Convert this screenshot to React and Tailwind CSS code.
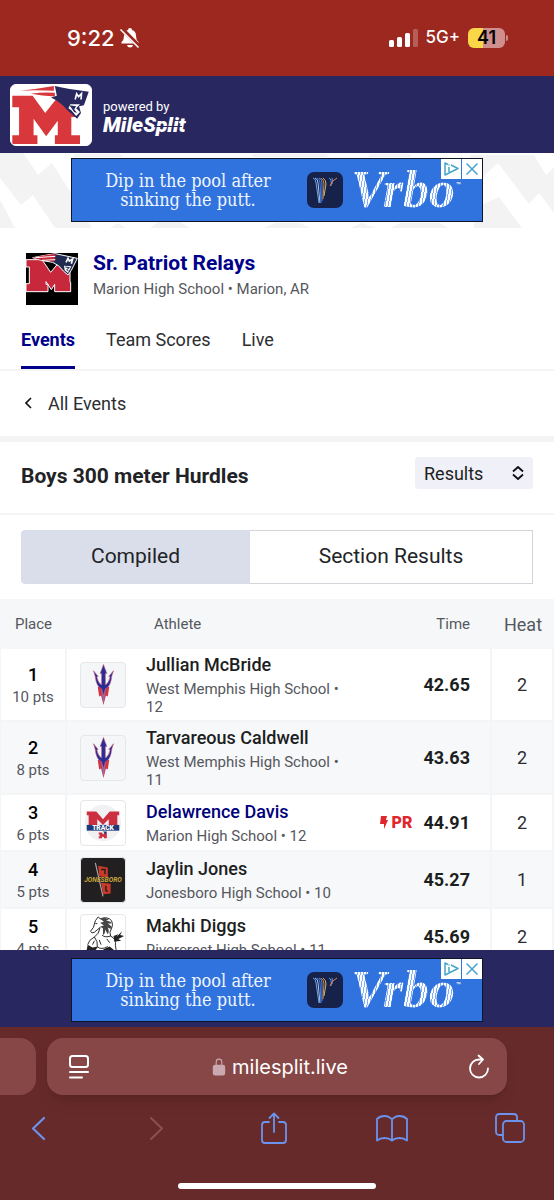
import { useState } from 'react';
import { IoLockClosed } from 'react-icons/io5';

const RESULTS = [
    { place: 1, points: 10, name: 'Jullian McBride', school: 'West Memphis High School', grade: 12, time: '42.65', heat: 2, logo: 'trident' },
    { place: 2, points: 8, name: 'Tarvareous Caldwell', school: 'West Memphis High School', grade: 11, time: '43.63', heat: 2, logo: 'trident' },
    { place: 3, points: 6, name: 'Delawrence Davis', school: 'Marion High School', grade: 12, time: '44.91', heat: 2, logo: 'track', pr: true, highlight: true },
    { place: 4, points: 5, name: 'Jaylin Jones', school: 'Jonesboro High School', grade: 10, time: '45.27', heat: 1, logo: 'jonesboro' },
    { place: 5, points: 4, name: 'Makhi Diggs', school: 'Rivercrest High School', grade: 11, time: '45.69', heat: 2, logo: 'horse' },
];

const TABS = ['Events', 'Team Scores', 'Live'];

const M_PATH = 'M1 11H22L35 29L46 15Q56 17 66 31V33H62V52H71V61H45V52H48V37L36 53L23 35V52H27V61H1V52H8V23H1Z';

function StatusBar() {
    return (
        <div className="flex h-[76px] shrink-0 items-center justify-between bg-[#9c2820] pl-[67px] pr-[46px] font-['Inter',sans-serif] text-white">
            <div className="flex items-center gap-1">
                <span className="text-[22px] font-medium">9:22</span>
                <svg width="22" height="22" viewBox="0 0 22 22" fill="#fff">
                    <path d="M11 1Q13 1 13 3Q17 4 17 9Q17 13 19.500 15V16.500H2.500V15Q5 13 5 9Q5 4 9 3Q9 1 11 1ZM8 18H14Q13.500 20.500 11 20.500Q8.500 20.500 8 18Z" />
                    <path d="M2.500 1.500L21 20" stroke="#9c2820" strokeWidth="4" />
                    <path d="M1.500 2.500L19.500 20.500" stroke="#fff" strokeWidth="1.600" />
                </svg>
            </div>
            <div className="flex items-center gap-[6px]">
                <svg width="30" height="19" viewBox="0 0 30 19" fill="#fff">
                    <rect x="0" y="11" width="5" height="7" rx="1.5" />
                    <rect x="8" y="8" width="5" height="10" rx="1.5" />
                    <rect x="16" y="4" width="5" height="14" rx="1.5" />
                    <rect x="24" y="0" width="5" height="18" rx="1.5" opacity="0.25" />
                </svg>
                <span className="text-[17px] font-medium">5G+</span>
                <div className="ml-[2px] flex items-center gap-px">
                    <div className="flex h-5 w-[37px] items-center justify-center rounded-md bg-linear-to-r from-[#fad748] from-40% to-[#cf8f8d] to-40% text-[18px] font-semibold leading-5 text-black">
                        41
                    </div>
                    <div className="h-[6px] w-[2px] rounded-r-full bg-[#cf8f8d]" />
                </div>
            </div>
        </div>
    );
}

function PatriotLogo() {
    return (
        <svg width="82" height="62" viewBox="0 0 82 62" className="rounded-md border border-white bg-white">
            <path d={M_PATH} fill="#d8373c" />
            <path d="M9 6Q27 4 44 1V6Q24 5 9 6Z" fill="#d8373c" />
            <path d="M20 9Q34 7 45 8V12Q32 11 20 9Z" fill="#d8373c" />
            <path d="M45 1Q58 4 80 7L75 21L70 22L72 29L68 35L58 26Q50 17 41 13L47 11Z" fill="#29285f" />
            <path d="M61 20H71L67 24L71 28L67 32L62 26L59 24Z" fill="#fff" />
            <path d="M60 21L67 22L65 25L68 29L65 28Z" fill="#29285f" />
            <path d="M66 15L67.500 9L69.500 12L72.500 9L72 15" fill="none" stroke="#fff" strokeWidth="1.700" />
        </svg>
    );
}

function MeetLogo() {
    return (
        <svg width="52" height="52" viewBox="0 0 78 78" className="shrink-0 bg-black">
            <path d="M0 10H24L37 29L47 17L66 28V44H67V58H43V47L38 55L30 43V47H33V58H0V46H5V21H0Z" fill="#c8283c" stroke="#fff" strokeWidth="1.5" />
            <path d="M10 7Q30 3 44 1L77 8L68 26L63 33L56 27Q50 18 40 14Q22 12 10 7Z" fill="#1f2b50" stroke="#fff" strokeWidth="1.5" />
            <path d="M10 7Q30 3 44 1L43 13Q26 12 10 7Z" fill="#c8283c" />
            <path d="M14 7L44 5M24 11L44 10" stroke="#fff" strokeWidth="1.5" />
            <path d="M60 14L63 8L65 12L70 9L68 16" fill="none" stroke="#fff" strokeWidth="2.4" />
            <path d="M57 19L68 20L63 30L58 26Z" fill="#fff" />
            <path d="M59 21L65 22L61 25L64 27" fill="none" stroke="#1f2b50" strokeWidth="1.5" />
        </svg>
    );
}

function AdBanner() {
    return (
        <a href="#vrbo" className="relative flex h-16 w-[412px] items-center border border-[#0e1524] bg-[#3173de] text-[#eef6ff]">
            <p className="w-[232px] text-center font-['DejaVu_Serif_Condensed','DejaVu_Serif',serif] text-[18px] leading-[19px]">
                Dip in the pool after
                <br />
                sinking the putt.
            </p>
            <svg width="36" height="36" viewBox="0 0 36 36" className="ml-[3px] shrink-0" fill="none" strokeWidth="1">
                <rect width="36" height="36" rx="7" fill="#16224a" />
                <path d="M6 6Q9 7 9 11L12 31" stroke="#6da4e8" />
                <path d="M8 6Q11 7 11 11L13 31" stroke="#a7c6f2" />
                <path d="M10 6Q13 7 13 11L14 31" stroke="#3f7de0" />
                <path d="M12 6Q15 7 15 11L15 29" stroke="#4b8cea" />
                <path d="M14 6Q17 8 17 12L16 27" stroke="#e0813c" />
                <path d="M16 6Q19 8 19 12L17 24" stroke="#d6b45c" />
                <path d="M22 6Q25 7 24 14M25 6Q26 9 25 12" stroke="#5a95ec" />
                <path d="M30 6Q25 8 23 14" stroke="#e0813c" />
            </svg>
            <span className="ml-2 shrink-0 bg-[repeating-linear-gradient(100deg,#ffffff_0_2px,#7fb0f5_2px_3px)] bg-clip-text pr-px font-['Liberation_Serif',serif] text-[52px] font-bold italic leading-[60px] text-transparent">
                Vrbo
            </span>
            <span className="-mt-2 shrink-0 text-[8px] leading-none text-white">™</span>
            <svg width="41" height="20" viewBox="0 0 41 20" className="absolute right-0 top-0" fill="none" stroke="#44a5c9" strokeWidth="1.5">
                <rect width="20" height="20" fill="#fff" stroke="none" />
                <rect x="21" width="20" height="20" fill="#fff" stroke="none" />
                <path d="M7 5.500L4 4V16L17 9.500L10 6" strokeLinejoin="round" />
                <path d="M8 8V13M8 5.500V6.500" />
                <path d="M25.500 4.500L36.500 15.500M36.500 4.500L25.500 15.500" />
            </svg>
        </a>
    );
}

function Trident() {
    return (
        <svg width="46" height="46" viewBox="0 0 46 46" className="rounded border border-gray-200 bg-[#f5f6f7]">
            <path d="M17.500 25L19 35L21 34L23.500 44L26 34L28 35L29.500 25Z" fill="#d5333f" />
            <path d="M21 27L23.500 43L26 27Z" fill="#8b6db8" />
            <path d="M13 8L18 14L16.500 14.500Q18 21 21.500 23V11H20L23.500 1.500L27 11H25.500V23Q29 21 30.500 14.500L29 14L34 8Q32 13 31.500 18Q30 25 25.500 27L23.500 34L21.500 27Q17 25 15.500 18Q15 13 13 8Z" fill="#2b2d96" stroke="#c9617c" strokeWidth="0.6" />
        </svg>
    );
}

function TrackLogo() {
    return (
        <svg width="46" height="46" viewBox="0 0 46 46" className="rounded border border-gray-200 bg-white">
            <circle cx="23" cy="23" r="19" fill="#f1f1f3" />
            <path d="M6 11H16L23 19L30 11H40V15H38V25H29V19L23 25L17 19V25H8V15H6Z" fill="#cc2f40" />
            <rect x="6" y="25" width="34" height="6" fill="#1e3a78" />
            <text x="23" y="30.500" textAnchor="middle" fill="#fff" fontFamily="Roboto, sans-serif" fontSize="7" fontWeight="900">TRACK</text>
            <path d="M18.500 33H22L23 35L25 33H27V39H24V37L23 38L22 37V39H18.500V37H19.500V35H18.500Z" fill="#cc2f40" />
            <path d="M23 32H27L26 35Z" fill="#1e3a78" />
        </svg>
    );
}

function JonesboroLogo() {
    return (
        <svg width="46" height="46" viewBox="0 0 46 46" className="rounded border border-gray-200 bg-[#211f20]">
            <path d="M15 5L23 40" stroke="#a9a7a8" strokeWidth="1.200" />
            <path d="M18 8L28 10V20L19 19Z" fill="#c93a2a" />
            <path d="M21 26L31 27V37L23 38Z" fill="#c93a2a" />
            <path d="M21 12L25 12V17M26 29V34L28 35" stroke="#211f20" strokeWidth="1.500" fill="none" />
            <text x="23" y="25.500" textAnchor="middle" fill="#c9a63a" fontFamily="Roboto, sans-serif" fontSize="7" fontWeight="700" fontStyle="italic">JONESBORO</text>
        </svg>
    );
}

function HorseLogo() {
    return (
        <svg width="46" height="46" viewBox="0 0 46 46" className="rounded border border-gray-200 bg-white" fill="none" stroke="#222" strokeWidth="1">
            <path d="M13 13L15 6L18 2L20 4Q28 1 32 6Q34 10 32 14M13 13L10 17Q11 20 14 18L20 13Q19 20 14 23Q8 26 7 31" />
            <path d="M32 14Q29 18 31 22Q37 25 36 32L38 44M14 23Q18 28 17 33Q21 37 28 33M31 22Q25 24 22 21" />
            <path d="M20 4Q26 2 29 5L26 6Q31 6 32 9L28 9Q33 12 32 15L28 13Q30 17 28 20L25 15Q26 19 23 21L23 14L20 12L24 11L20 8L24 7Z" fill="#444" stroke="none" />
            <path d="M34 22L39 20L37 23L43 17L41 21L45 22L39 25L42 27L35 28Z" fill="#222" stroke="none" />
            <path d="M7 31L12 34L18 33L15 37L10 38L7 45L5 41ZM23 36L30 33L35 37L33 45L28 39Z" fill="#222" stroke="none" />
            <path d="M15 9L17 9M27 25L30 29M14 27L12 31M19 26L21 31" />
        </svg>
    );
}

const LOGOS = { trident: Trident, track: TrackLogo, jonesboro: JonesboroLogo, horse: HorseLogo };

function ResultRow({ row, striped }) {
    const Logo = LOGOS[row.logo];
    return (
        <tr className={striped ? 'bg-[#f7f8fa]' : 'bg-white'}>
            <td className="h-[57px] border-b-2 border-l border-r-2 border-[#f4f5f7] text-center">
                <p className="text-[18px] font-medium leading-6 text-black">{row.place}</p>
                <p className="text-[15px] leading-5 text-[#55575d]">{row.points} pts</p>
            </td>
            <td className="border-b-2 border-[#f4f5f7] pl-[13px]">
                <Logo />
            </td>
            <td className="border-b-2 border-[#f4f5f7] py-1">
                <p className={row.highlight ? 'text-[18px] font-medium leading-6 text-[#00007b]' : 'text-[18px] font-medium leading-6 text-[#1c1e21]'}>{row.name}</p>
                <p className="mt-[3px] max-w-[206px] text-[15px] leading-[18px] text-[#55575d]">{row.school} • {row.grade}</p>
            </td>
            <td className="border-b-2 border-r-2 border-[#f4f5f7] pr-5">
                <div className="flex items-center justify-end gap-[11px]">
                    {row.pr && (
                        <span className="flex items-center gap-1 text-base font-black text-[#e1262d]">
                            <svg width="8" height="13" viewBox="0 0 8 13" fill="currentColor">
                                <path d="M1 0H7L6 4H8L4 13L4 8H0Z" />
                            </svg>
                            PR
                        </span>
                    )}
                    <span className="text-[18px] font-bold text-[#1c1e21]">{row.time}</span>
                </div>
            </td>
            <td className="border-b-2 border-r-2 border-[#f4f5f7] text-center text-[18px] text-[#2b2d31]">{row.heat}</td>
        </tr>
    );
}

function BrowserBar() {
    return (
        <div className="flex h-[173px] shrink-0 flex-col bg-[#672a2a] pt-[11px] font-['Inter',sans-serif]">
            <div className="flex h-[57px] gap-[11px]">
                <div className="w-9 rounded-r-2xl bg-[#874747]" />
                <div className="flex flex-1 items-center justify-between rounded-2xl bg-[#874747] pl-[22px] pr-[18px] text-white shadow-lg">
                    <button aria-label="Page menu">
                        <svg width="20" height="24" viewBox="0 0 20 24" fill="none" stroke="currentColor" strokeWidth="2" strokeLinecap="round">
                            <rect x="1" y="1" width="18" height="11" rx="2.500" />
                            <path d="M1 17H19M1 22.500H13" />
                        </svg>
                    </button>
                    <div className="flex items-center gap-1">
                        <IoLockClosed size={18} className="text-[#c9a8b0]" />
                        <span className="text-[20px]">milesplit.live</span>
                    </div>
                    <button aria-label="Reload">
                        <svg width="20" height="25" viewBox="0 0 20 25" fill="none" stroke="currentColor" strokeWidth="1.800" strokeLinecap="round" strokeLinejoin="round">
                            <path d="M19 14.500A9 9 0 1 1 10 5.500H14M9.500 1.500L14 5.500L10 10" />
                        </svg>
                    </button>
                </div>
                <div className="w-9" />
            </div>
            <div className="flex h-[66px] items-center justify-between pl-[22px] pr-7 text-[#6b93ee]">
                <button aria-label="Back" className="flex w-8 justify-center">
                    <svg width="15" height="25" viewBox="0 0 15 25" fill="none" stroke="currentColor" strokeWidth="2.200" strokeLinecap="round" strokeLinejoin="round">
                        <path d="M13 2L2 12.500L13 23" />
                    </svg>
                </button>
                <button aria-label="Forward" className="flex w-8 justify-center text-[#8b5050]">
                    <svg width="15" height="25" viewBox="0 0 15 25" fill="none" stroke="currentColor" strokeWidth="2" strokeLinecap="round" strokeLinejoin="round">
                        <path d="M2 2L13 12.500L2 23" />
                    </svg>
                </button>
                <button aria-label="Share" className="flex w-8 justify-center">
                    <svg width="26" height="32" viewBox="0 0 26 32" fill="none" stroke="currentColor" strokeWidth="1.800" strokeLinecap="round" strokeLinejoin="round">
                        <path d="M8 10H4Q1 10 1 13V28Q1 31 4 31H22Q25 31 25 28V13Q25 10 22 10H18M13 20V1.500M8.500 6L13 1.500L17.500 6" />
                    </svg>
                </button>
                <button aria-label="Bookmarks" className="flex w-8 justify-center">
                    <svg width="32" height="27" viewBox="0 0 32 27" fill="none" stroke="currentColor" strokeWidth="1.800" strokeLinejoin="round">
                        <path d="M16 4.500Q13 1 8.500 1Q4 1 1 4V25.500Q4 23 8.500 23Q13 23 16 25.500Q19 23 23.500 23Q28 23 31 25.500V4Q28 1 23.500 1Q19 1 16 4.500V25" />
                    </svg>
                </button>
                <button aria-label="Tabs" className="flex w-8 justify-center">
                    <svg width="30" height="30" viewBox="0 0 30 30" fill="none" stroke="currentColor" strokeWidth="1.800">
                        <rect x="8" y="8" width="21" height="21" rx="3.500" />
                        <path d="M8 22H4.500Q1 22 1 18.500V4.500Q1 1 4.500 1H18.500Q22 1 22 4.500V8" />
                    </svg>
                </button>
            </div>
            <div className="mx-auto mt-[22px] h-[6px] w-[198px] rounded-full bg-white" />
        </div>
    );
}

export default function App() {
    const [tab, setTab] = useState('Events');
    const [view, setView] = useState('compiled');

    return (
        <div className="flex h-screen flex-col bg-white font-['Roboto',sans-serif]">
            <StatusBar />

            <header className="flex h-[77px] shrink-0 items-center gap-[11px] bg-[#29275f] pl-[10px] text-white">
                <PatriotLogo />
                <div className="pt-[5px]">
                    <p className="text-[13px] leading-4">powered by</p>
                    <p className="relative text-[21px] font-black italic leading-5">
                        MileSplit
                        {/* slit through the wordmark */}
                        <span className="absolute right-1 top-[11px] h-px w-7 bg-[#29275f]" />
                    </p>
                </div>
            </header>

            <main className="min-h-0 flex-1 overflow-hidden">
                <div className="relative flex h-[75px] justify-center pt-[5px]">
                    <svg className="absolute inset-0 h-full w-full" viewBox="0 0 554 75" preserveAspectRatio="none" fill="#f3f3f3">
                        <path d="M0 0H23L38 22L52 10L71 40L92 75H55L33 42L21 52L0 25ZM0 47L15 75H0Z" />
                        <path d="M470 2H534L546 22L554 14V60L539 40L529 51L498 10L483 24L470 30ZM474 55L499 44L522 75H474Z" />
                        <path d="M110 75L118 70L126 75ZM150 75L158 69H180L190 75ZM264 75L275 70H300L310 75ZM350 75L362 70L376 75ZM390 75L400 70H440L448 75ZM74 1H120L124 4H74ZM250 1H330L326 4H254ZM370 1H410L412 4H368Z" />
                    </svg>
                    <AdBanner />
                </div>

                <div className="flex items-start gap-[15px] px-[26px] pt-[25px]">
                    <MeetLogo />
                    <div>
                        <h1 className="text-[21px] font-bold leading-5 text-[#00008b]">Sr. Patriot Relays</h1>
                        <p className="mt-[6px] text-[15px] leading-5 text-[#55575d]">Marion High School • Marion, AR</p>
                    </div>
                </div>

                <nav className="flex gap-[31px] border-b-2 border-[#f5f5f6] px-[21px] pt-[21px]">
                    {TABS.map(item => (
                        <button
                            key={item}
                            onClick={() => setTab(item)}
                            className={tab === item
                                ? 'h-[43px] border-b-3 border-[#00008b] pb-[14px] text-[18px] font-bold text-[#00008b]'
                                : 'h-[43px] border-b-3 border-transparent pb-[14px] text-[18px] text-[#2b2d31]'}
                        >
                            {item}
                        </button>
                    ))}
                </nav>

                <a href="#events" className="flex h-[65px] items-center gap-4 pb-px pl-[25px] text-[18px] text-[#2b2d31]">
                    <svg width="7" height="12" viewBox="0 0 7 12" fill="none" stroke="#111" strokeWidth="1.600">
                        <path d="M6 1L1 6L6 11" />
                    </svg>
                    All Events
                </a>

                <div className="flex h-[79px] items-center justify-between border-t-6 border-b-2 border-t-[#f4f4f5] border-b-[#f4f4f5] px-[21px]">
                    <h2 className="mb-[2px] text-[21px] font-bold text-[#212327]">Boys 300 meter Hurdles</h2>
                    <div className="relative mb-[9px]">
                        <select aria-label="View" className="block h-8 w-[118px] appearance-none rounded bg-[#eff0f8] pl-[9px] text-[18px] text-[#1c1e21]">
                            <option>Results</option>
                            <option>Entries</option>
                        </select>
                        <svg width="12" height="14" viewBox="0 0 12 14" className="pointer-events-none absolute right-[9px] top-[9px]" fill="none" stroke="#111" strokeWidth="1.800" strokeLinejoin="round">
                            <path d="M1 5.500L6 1L11 5.500M1 8.500L6 13L11 8.500" />
                        </svg>
                    </div>
                </div>

                <div className="flex px-[21px] py-[15px]">
                    <button
                        onClick={() => setView('compiled')}
                        className={view === 'compiled'
                            ? 'h-[54px] w-[229px] rounded-l border border-[#d8dce9] bg-[#dadeeb] text-[21px] text-[#212327]'
                            : 'h-[54px] w-[229px] rounded-l border border-[#d9dade] text-[21px] text-[#212327]'}
                    >
                        Compiled
                    </button>
                    <button
                        onClick={() => setView('sections')}
                        className={view === 'sections'
                            ? 'h-[54px] flex-1 border border-[#d8dce9] bg-[#dadeeb] text-[21px] text-[#212327]'
                            : 'h-[54px] flex-1 border border-l-0 border-[#d3d5da] text-[21px] text-[#212327]'}
                    >
                        Section Results
                    </button>
                </div>

                <table className="w-full table-fixed border-separate border-spacing-0">
                    <colgroup>
                        <col className="w-[67px]" />
                        <col className="w-[79px]" />
                        <col />
                        <col className="w-[124px]" />
                        <col className="w-[62px]" />
                    </colgroup>
                    <thead>
                        <tr className="h-[50px] bg-[#f6f7f9] text-[15px] text-[#55575d]">
                            <th className="font-normal">Place</th>
                            <th aria-label="Team" />
                            <th className="pl-2 text-left font-normal">Athlete</th>
                            <th className="pr-[22px] text-right font-normal">Time</th>
                            <th className="text-[18px] font-normal">Heat</th>
                        </tr>
                    </thead>
                    <tbody>
                        {RESULTS.map((row, i) => (
                            <ResultRow key={row.place} row={row} striped={i % 2 === 1} />
                        ))}
                    </tbody>
                </table>
            </main>

            <div className="flex h-[77px] shrink-0 justify-center bg-[#29275f] pt-2">
                <AdBanner />
            </div>
            <BrowserBar />
        </div>
    );
}
